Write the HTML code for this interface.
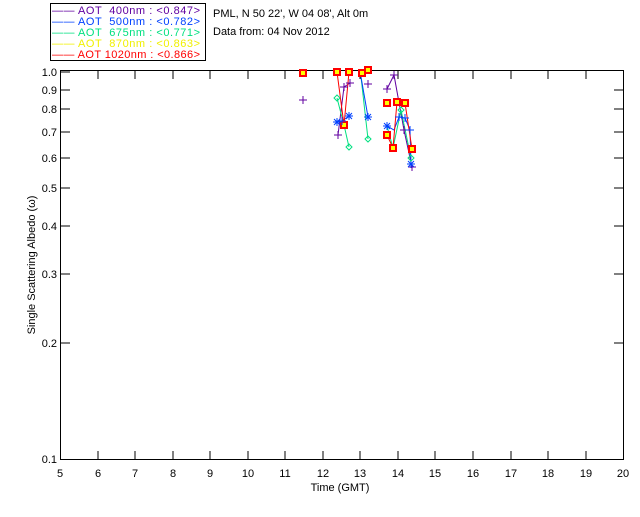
<!DOCTYPE html>
<html><head><style>
body{margin:0;background:#fff;width:640px;height:512px;overflow:hidden}
svg text{font-family:"Liberation Sans",sans-serif;font-size:11px}
</style></head><body>
<svg width="640" height="512" xmlns="http://www.w3.org/2000/svg">
<rect x="50.5" y="3.5" width="155" height="57" fill="none" stroke="#000"/>
<g font-size="11">
<text x="52" y="14" fill="#6000a0" textLength="148" lengthAdjust="spacing">——  AOT &#160;400nm : &lt;0.847&gt;</text>
<text x="52" y="25" fill="#0040ff" textLength="148" lengthAdjust="spacing">——  AOT &#160;500nm : &lt;0.782&gt;</text>
<text x="52" y="36" fill="#00e080" textLength="148" lengthAdjust="spacing">——  AOT &#160;675nm : &lt;0.771&gt;</text>
<text x="52" y="47" fill="#f0f000" textLength="148" lengthAdjust="spacing">——  AOT &#160;870nm : &lt;0.863&gt;</text>
<text x="52" y="58" fill="#ff0000" textLength="148" lengthAdjust="spacing">——  AOT 1020nm : &lt;0.866&gt;</text>
</g>
<text x="213" y="17">PML, N 50 22', W 04 08', Alt 0m</text>
<text x="213" y="35">Data from: 04 Nov 2012</text>
<rect x="60.5" y="70.5" width="563" height="389" fill="none" stroke="#000"/>
<g stroke="#000">
<line x1="60" y1="72" x2="70" y2="72"/><line x1="60" y1="90" x2="70" y2="90"/><line x1="60" y1="109" x2="70" y2="109"/><line x1="60" y1="132" x2="70" y2="132"/><line x1="60" y1="158" x2="70" y2="158"/><line x1="60" y1="188" x2="70" y2="188"/><line x1="60" y1="226" x2="70" y2="226"/><line x1="60" y1="274" x2="70" y2="274"/><line x1="60" y1="343" x2="70" y2="343"/>
<line x1="614" y1="90" x2="624" y2="90"/><line x1="614" y1="109" x2="624" y2="109"/><line x1="614" y1="132" x2="624" y2="132"/><line x1="614" y1="158" x2="624" y2="158"/><line x1="614" y1="188" x2="624" y2="188"/><line x1="614" y1="226" x2="624" y2="226"/><line x1="614" y1="274" x2="624" y2="274"/><line x1="614" y1="343" x2="624" y2="343"/>
</g>
<g text-anchor="end">
<text x="57" y="76">1.0</text><text x="57" y="94">0.9</text><text x="57" y="113">0.8</text><text x="57" y="136">0.7</text><text x="57" y="162">0.6</text><text x="57" y="192">0.5</text><text x="57" y="230">0.4</text><text x="57" y="278">0.3</text><text x="57" y="347">0.2</text><text x="57" y="463">0.1</text>
</g>
<g stroke="#000">
<line x1="98" y1="459" x2="98" y2="451"/><line x1="135" y1="459" x2="135" y2="451"/><line x1="173" y1="459" x2="173" y2="451"/><line x1="210" y1="459" x2="210" y2="451"/><line x1="248" y1="459" x2="248" y2="451"/><line x1="285" y1="459" x2="285" y2="451"/><line x1="323" y1="459" x2="323" y2="451"/><line x1="360" y1="459" x2="360" y2="451"/><line x1="398" y1="459" x2="398" y2="451"/><line x1="435" y1="459" x2="435" y2="451"/><line x1="473" y1="459" x2="473" y2="451"/><line x1="511" y1="459" x2="511" y2="451"/><line x1="548" y1="459" x2="548" y2="451"/><line x1="586" y1="459" x2="586" y2="451"/>
<line x1="98" y1="71" x2="98" y2="79"/><line x1="135" y1="71" x2="135" y2="79"/><line x1="173" y1="71" x2="173" y2="79"/><line x1="210" y1="71" x2="210" y2="79"/><line x1="248" y1="71" x2="248" y2="79"/><line x1="285" y1="71" x2="285" y2="79"/><line x1="323" y1="71" x2="323" y2="79"/><line x1="360" y1="71" x2="360" y2="79"/><line x1="398" y1="71" x2="398" y2="79"/><line x1="435" y1="71" x2="435" y2="79"/><line x1="473" y1="71" x2="473" y2="79"/><line x1="511" y1="71" x2="511" y2="79"/><line x1="548" y1="71" x2="548" y2="79"/><line x1="586" y1="71" x2="586" y2="79"/>
</g>
<g text-anchor="middle">
<text x="60" y="477">5</text><text x="98" y="477">6</text><text x="135" y="477">7</text><text x="173" y="477">8</text><text x="210" y="477">9</text><text x="248" y="477">10</text><text x="285" y="477">11</text><text x="323" y="477">12</text><text x="360" y="477">13</text><text x="398" y="477">14</text><text x="435" y="477">15</text><text x="473" y="477">16</text><text x="511" y="477">17</text><text x="548" y="477">18</text><text x="586" y="477">19</text><text x="623" y="477">20</text>
<text x="340" y="491">Time (GMT)</text>
<text transform="translate(35,265) rotate(-90)">Single Scattering Albedo (ω)</text>
</g>
<polyline fill="none" stroke="#6000a0" points="338,135 344,87 350,83"/>
<polyline fill="none" stroke="#6000a0" points="387,89 394,75 404,130 412,167"/>
<polyline fill="none" stroke="#00e080" points="337,98 344,125 349,147"/>
<polyline fill="none" stroke="#00e080" points="361,77 368,139"/>
<polyline fill="none" stroke="#00e080" points="387,126 393,148 401,110 411,158"/>
<polyline fill="none" stroke="#0040ff" points="337,122 342,121 349,116"/>
<polyline fill="none" stroke="#0040ff" points="361,77 368,117"/>
<polyline fill="none" stroke="#0040ff" points="387,126 394,130 399,117 405,118 410,130 411,164"/>
<polyline fill="none" stroke="#ff0000" points="337,72 344,125 349,72"/>
<polyline fill="none" stroke="#ff0000" points="362,73 368,70"/>
<polyline fill="none" stroke="#ff0000" points="387,135 393,148 397,102 405,103 412,149"/>
<g fill="#ff0" stroke="#f00" stroke-width="2">
<rect x="300" y="70" width="6" height="6"/><rect x="334" y="69" width="6" height="6"/><rect x="346" y="69" width="6" height="6"/><rect x="359" y="70" width="6" height="6"/><rect x="365" y="67" width="6" height="6"/><rect x="384" y="100" width="6" height="6"/><rect x="394" y="99" width="6" height="6"/><rect x="402" y="100" width="6" height="6"/><rect x="384" y="132" width="6" height="6"/><rect x="390" y="145" width="6" height="6"/><rect x="409" y="146" width="6" height="6"/><rect x="341" y="122" width="6" height="6"/>
</g>
<g stroke="#6000a0">
<path d="M299 100h8M303 96v8M340 87h8M344 83v8M346 83h8M350 79v8M364 84h8M368 80v8M383 89h8M387 85v8M390 75h8M394 71v8M334 135h8M338 131v8M408 167h8M412 163v8M400 130h8M404 126v8"/>
</g>
<g stroke="#0040ff">
<path d="M333 122h8M337 118v8M334 119l6 6M340 119l-6 6M338 121h8M342 117v8M345 116h8M349 112v8M346 113l6 6M352 113l-6 6M364 117h8M368 113v8M365 114l6 6M371 114l-6 6M383 126h8M387 122v8M384 123l6 6M390 123l-6 6M395 117h8M399 113v8M401 118h8M405 114v8M407 164h8M411 160v8M408 161l6 6M414 161l-6 6M406 130h8M410 126v8"/>
</g>
<g fill="none" stroke="#00e080">
<path d="M337 95l3 3-3 3-3-3zM349 144l3 3-3 3-3-3zM368 136l3 3-3 3-3-3zM401 107l3 3-3 3-3-3zM411 155l3 3-3 3-3-3z"/>
</g>
</svg>
</body></html>
